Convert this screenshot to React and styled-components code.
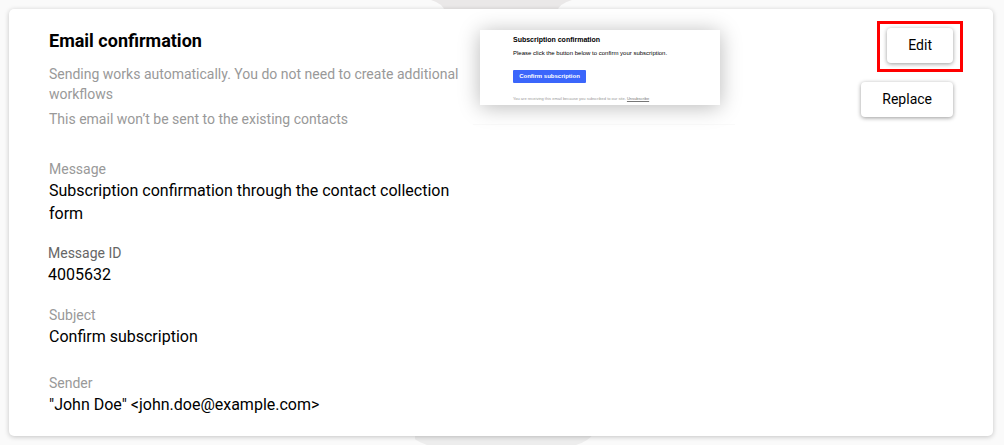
import React from 'react';
import styled, { createGlobalStyle } from 'styled-components';

const GlobalStyle = createGlobalStyle`
  * {
    box-sizing: border-box;
  }
  body {
    margin: 0;
    background: #fafafa;
    color: #000;
    font-family: Roboto, "Liberation Sans", sans-serif;
  }
`;

const Page = styled.main`
  position: relative;
  padding: 9px 11px 9px 9px;
  overflow: hidden;
`;

// grey step of the flow that shows behind the card
const Backdrop = styled.svg`
  position: absolute;
  left: 415px;
  ${props => (props.$bottom ? 'bottom: 0;' : 'top: 0;')}
`;

const Card = styled.section`
  position: relative;
  display: flex;
  align-items: flex-start;
  padding: 19px 40px 20px;
  border-radius: 5px;
  background: #fff;
  box-shadow: 0 1px 5px rgba(0, 0, 0, 0.22);
`;

const Details = styled.div`
  flex: 0 1 424px;
`;

const Title = styled.h2`
  margin: 0 0 10px;
  font-size: 18px;
  font-weight: 700;
  line-height: 26px;
`;

const Hint = styled.p`
  margin: 0 0 5px;
  color: #999;
  font-size: 14px;
  line-height: 20px;
`;

const Fields = styled.dl`
  margin: 30px 0 0;
`;

const Field = styled.div`
  margin-left: ${props => (props.$strong ? '-1px' : '0')};
  margin-bottom: ${props => props.$gap || 0}px;
`;

const Label = styled.dt`
  color: ${props => (props.$strong ? '#666' : '#999')};
  font-size: 14px;
  line-height: 20px;
`;

const Value = styled.dd`
  margin: 0;
  font-size: 16px;
  line-height: 23px;
`;

const PreviewArea = styled.div`
  flex: 0 0 262px;
  height: 97px;
  padding: 2px 7px 0;
  border-bottom: 1px solid #fafafa;
`;

const Preview = styled.article`
  width: 240px;
  height: 75px;
  padding: 6px 33px 0;
  background: #fff;
  box-shadow: 0 2px 20px rgba(0, 0, 0, 0.28);
  font-family: "Liberation Sans", Arial, sans-serif;
  white-space: nowrap;
`;

const PreviewTitle = styled.h3`
  margin: 0 0 5px;
  font-size: 7px;
  line-height: 8px;
`;

const PreviewText = styled.p`
  margin: 0 0 13px;
  font-size: 6px;
  line-height: 8px;
`;

const PreviewLink = styled.a`
  display: block;
  width: 73px;
  margin-bottom: 12px;
  border-radius: 1px;
  background: #3b66fb;
  color: #fff;
  font-size: 6px;
  font-weight: 700;
  line-height: 13px;
  text-align: center;
  text-decoration: none;
`;

const PreviewFooter = styled.p`
  margin: 0;
  color: #999;
  font-size: 4px;
  line-height: 8px;

  a {
    color: #777;
  }
`;

const Actions = styled.div`
  display: flex;
  flex-direction: column;
  align-items: flex-end;
  gap: 19px;
  margin-left: auto;
`;

const Highlight = styled.div`
  position: relative;
  display: flex;

  &::after {
    content: '';
    position: absolute;
    inset: -7px -10px -9px;
    border: 3px solid #f00;
    pointer-events: none;
  }
`;

const Button = styled.button`
  height: 35px;
  padding: 0 21px 2px;
  border: 0;
  border-radius: 4px;
  background: #fff;
  box-shadow: 0 1px 4px rgba(0, 0, 0, 0.4);
  color: #000;
  font-family: inherit;
  font-size: 14px;
  cursor: pointer;
`;

const fields = [
  { label: 'Message', value: 'Subscription confirmation through the contact collection form', gap: 18 },
  { label: 'Message ID', value: '4005632', gap: 19, strong: true },
  { label: 'Subject', value: 'Confirm subscription', gap: 25 },
  { label: 'Sender', value: '"John Doe" <john.doe@example.com>' },
];

const EmailPreview = () => (
  <Preview>
    <PreviewTitle>Subscription confirmation</PreviewTitle>
    <PreviewText>Please click the button below to confirm your subscription.</PreviewText>
    <PreviewLink href="#confirm">Confirm subscription</PreviewLink>
    <PreviewFooter>
      You are receiving this email because you subscribed to our site. <a href="#unsubscribe">Unsubscribe</a>
    </PreviewFooter>
  </Preview>
);

function App() {
  return (
    <>
      <GlobalStyle />
      <Page>
        <Backdrop width="170" height="12" viewBox="0 0 170 12" aria-hidden="true">
          <path d="M16 0Q29 4 30 12H142Q143 4 157 0Z" fill="#eae8e8" />
        </Backdrop>
        <Backdrop $bottom width="180" height="12" viewBox="0 0 180 12" aria-hidden="true">
          <path d="M-6 0Q-1 8 12 12H161Q174 8 179 0Z" fill="#ededed" />
        </Backdrop>
        <Card>
          <Details>
            <Title>Email confirmation</Title>
            <Hint>Sending works automatically. You do not need to create additional workflows</Hint>
            <Hint>This email won’t be sent to the existing contacts</Hint>
            <Fields>
              {fields.map(field => (
                <Field key={field.label} $gap={field.gap} $strong={field.strong}>
                  <Label $strong={field.strong}>{field.label}</Label>
                  <Value>{field.value}</Value>
                </Field>
              ))}
            </Fields>
          </Details>
          <PreviewArea>
            <EmailPreview />
          </PreviewArea>
          <Actions>
            <Highlight>
              <Button type="button">Edit</Button>
            </Highlight>
            <Button type="button">Replace</Button>
          </Actions>
        </Card>
      </Page>
    </>
  );
}

export default App;
